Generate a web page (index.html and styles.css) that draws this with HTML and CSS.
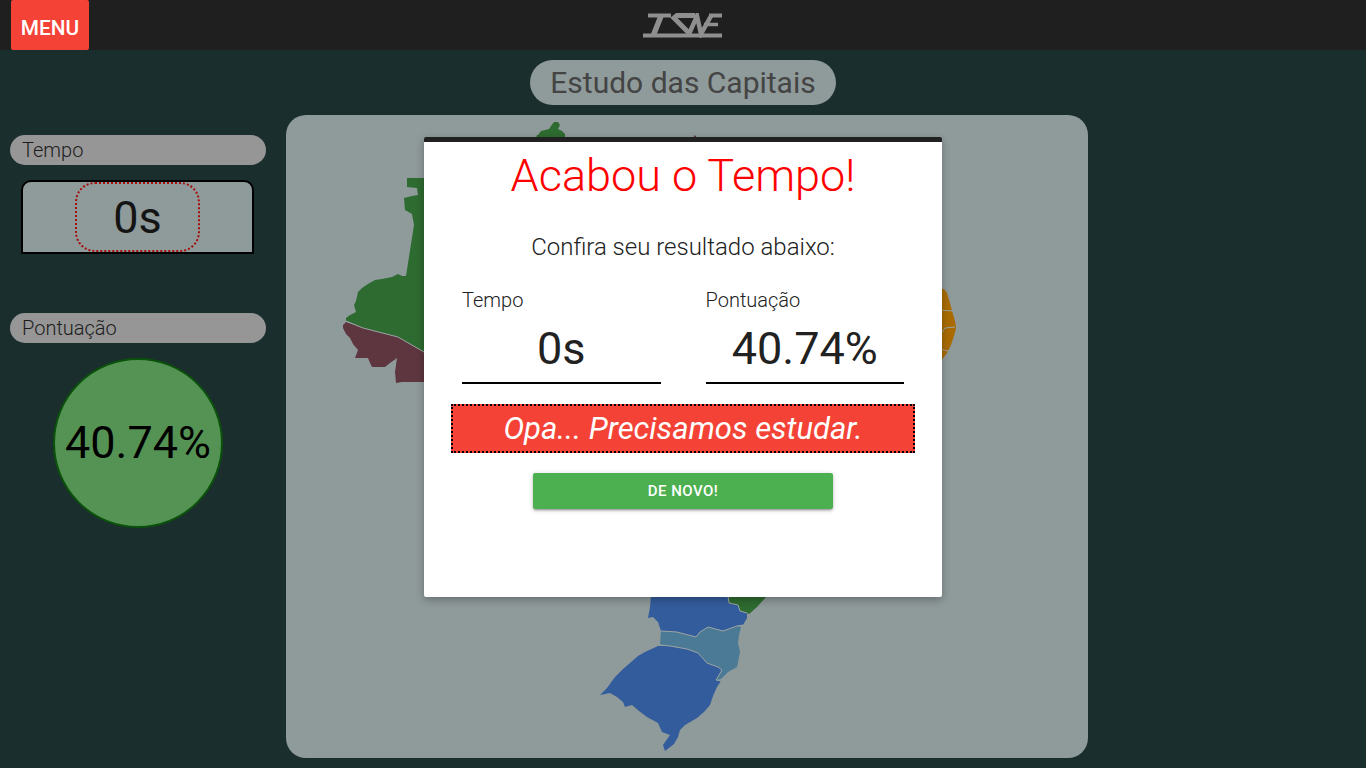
FILE: index.html
```html
<!DOCTYPE html>
<html lang="pt-BR">
<head>
<meta charset="utf-8">
<title>Estudo das Capitais</title>
<link rel="stylesheet" href="styles.css">
</head>
<body>
<header class="topbar">
  <a class="menu-btn">MENU</a>
  <svg class="logo" width="80" height="25" viewBox="0 0 80 25" aria-label="TSWE">
    <g fill="none" stroke="#8f8f8f" stroke-width="4">
      <path d="M0 22.5H79"/>
      <path d="M5 2.5H28"/>
      <path d="M18 3L10.500 22" stroke-width="5.500"/>
      <path d="M52 2.500H34L31 5L47 21" stroke-width="5"/>
      <path d="M46 21L54 3L58 21L68 3" stroke-width="4.500"/>
      <path d="M66 2.500H79"/>
      <path d="M61 11.500H75" stroke-width="3.500"/>
    </g>
  </svg>
</header>
<main class="page">
  <h1 class="page-title">Estudo das Capitais</h1>
  <div class="content">
    <aside class="side">
      <div class="side-label">Tempo</div>
      <div class="timer-box"><div class="timer-value">0s</div></div>
      <div class="side-label side-label-score">Pontuação</div>
      <div class="score-circle">40.74%</div>
    </aside>
    <section class="map-card">
      <svg class="map" viewBox="286 115 802 643" width="802" height="643">
        <path class="g" d="M538 135L541 131L545 130L549 129L551 126L554 122L558 122L560 125L558 129L562 131L565 134L565 138H536L537 135Z"/>
        <path class="r" d="M693 138L695 135L697 138Z"/>
        <path class="g" d="M407 178L424 178V352L398 337L363 328L346 321L346 318L350 315L356 312L354 305L356 301L358 292L362 288L368 284L375 280L382 279L392 277L398 274L402 276L406 276L414 225L412 214L405 210L404 198L412 196L418 195L417 188L407 187Z"/>
        <path class="r" d="M343 325L346 322L363 328L398 337L424 352V382L402 382L396 383L395 372L397 358L390 363L385 367L372 367L370 363L368 358L355 358L358 350L353 344L350 338L346 334L343 328Z"/>
        <path class="o" d="M940 289L944 289L947 293L950 303L952 311L955 321L956 328L954 336L951 345L947 353L940 362Z"/>
        <path class="b" d="M651 596L650 607L648 618L653 617L658 622L661 631L677 632L696 637L700 632L708 627L723 631L737 626L743 625L747 618L747 613L740 611L738 605L729 603L728 596Z"/>
        <path class="g" d="M729 596L729 603L738 605L740 611L747 613L749 614L757 607L767 596Z"/>
        <path class="t" d="M661 631L677 632L696 637L700 632L708 627L723 631L737 626L741 627L739 635L738 643L740 652L737 667L728 672L721 679L716 680L722 670L718 667L707 663L698 653L687 649L670 646L660 645Z"/>
        <path class="b" d="M658 646L670 646L687 649L698 653L707 663L718 667L722 670L716 680L721 681L717 687L713 696L710 705L704 712L697 718L685 725L680 730L678 737L674 744L665 751L663 745L670 735L662 732L658 723L647 717L639 711L632 705L625 707L623 702L617 697L610 693L600 695L607 688L615 677L622 670L630 663L638 656L645 652Z"/>
        <g class="borders">
          <path d="M346 321L363 328L398 337L424 352"/>
          <path d="M940 310L952 311M940 335L945 328L955 327M940 349L948 351"/>
          <path d="M728 596L729 603L738 605L740 611L747 613"/>
          <path d="M661 631L677 632L696 637L700 632L708 627L723 631L737 626L743 625"/>
          <path d="M660 645L670 646L687 649L698 653L707 663L718 667L722 670L716 680L721 681"/>
        </g>
      </svg>
    </section>
  </div>
</main>
<div class="modal">
  <h2 class="modal-title">Acabou o Tempo!</h2>
  <p class="modal-sub">Confira seu resultado abaixo:</p>
  <div class="results">
    <div class="result">
      <div class="result-label">Tempo</div>
      <div class="result-value">0s</div>
    </div>
    <div class="result">
      <div class="result-label">Pontuação</div>
      <div class="result-value">40.74%</div>
    </div>
  </div>
  <div class="verdict">Opa... Precisamos estudar.</div>
  <a class="again-btn">DE NOVO!</a>
</div>
</body>
</html>
```
FILE: styles.css
```css
* { box-sizing: border-box; }
html, body { margin: 0; height: 100%; }
body {
  background: #1b2e2e;
  font-family: Roboto, "Liberation Sans", sans-serif;
  color: #212121;
  height: 768px;
  overflow: hidden;
}
.topbar {
  height: 50px;
  background: #1f1f1f;
  display: flex;
  align-items: center;
  justify-content: center;
  position: relative;
}
.menu-btn {
  position: absolute;
  left: 11px;
  top: 0;
  width: 78px;
  height: 50px;
  background: #f44336;
  color: #fff;
  border-radius: 2px;
  font-size: 20.8px;
  font-weight: 500;
  line-height: 56px;
  text-align: center;
}
.logo { display: block; }
.page {
  display: flex;
  flex-direction: column;
  align-items: center;
  padding-top: 10px;
}
.page-title {
  margin: 0;
  width: 306px;
  height: 45px;
  border-radius: 23px;
  background: #8f9a9a;
  color: #444;
  font-size: 30px;
  font-weight: 400;
  line-height: 45px;
  text-align: center;
}
.content {
  width: 100%;
  display: flex;
  align-items: flex-start;
  margin-top: 10px;
  padding-left: 10px;
}
.side {
  width: 256px;
  margin-right: 20px;
  padding-top: 20px;
}
.side-label {
  height: 30px;
  border-radius: 15px;
  background: #969696;
  color: #1c1c1c;
  padding-left: 12px;
  font-size: 20px;
  font-weight: 300;
  line-height: 31px;
}
.side-label-score { margin-top: 59px; }
.timer-box {
  width: 233px;
  height: 74px;
  margin: 15px 0 0 11px;
  background: #8f9a9a;
  border: 2px solid #000;
  border-radius: 10px 10px 0 0;
  display: flex;
  justify-content: center;
}
.timer-value {
  width: 125px;
  height: 70px;
  border: 2px dotted #a80d0d;
  border-radius: 20px;
  color: #141414;
  font-size: 45px;
  font-weight: 400;
  line-height: 68px;
  text-align: center;
}
.score-circle {
  width: 170px;
  height: 170px;
  margin: 15px 0 0 43px;
  border-radius: 50%;
  border: 2px solid #0a520a;
  background: #559355;
  color: #000;
  font-size: 45px;
  font-weight: 400;
  line-height: 166px;
  text-align: center;
}
.map-card {
  width: 802px;
  height: 643px;
  background: #8f9a9a;
  border-radius: 20px;
  overflow: hidden;
}
.map { display: block; }
.g { fill: #2e6b30; }
.r { fill: #5e3640; }
.o { fill: #a96b00; }
.b { fill: #335c9c; }
.t { fill: #4a7a96; }
.borders {
  fill: none;
  stroke: #9aa3a3;
  stroke-width: 1;
  stroke-linejoin: round;
}
.modal {
  position: absolute;
  left: 424px;
  top: 137px;
  width: 518px;
  height: 460px;
  background: #fff;
  border-top: 5px solid #212121;
  border-radius: 2px;
  box-shadow: 0 3px 8px rgba(0,0,0,.28);
  display: flex;
  flex-direction: column;
  align-items: center;
}
.modal-title {
  margin: 5px 0 0;
  color: #f00;
  font-size: 45px;
  font-weight: 300;
  line-height: 58px;
  text-align: center;
}
.modal-sub {
  margin: 27px 0 0;
  font-size: 24px;
  font-weight: 300;
  line-height: 30px;
  text-align: center;
}
.results {
  display: flex;
  gap: 45px;
  margin-top: 26px;
}
.result { width: 198.5px; }
.result-label {
  font-size: 20px;
  font-weight: 300;
  line-height: 24px;
}
.result-value {
  height: 72px;
  border-bottom: 2px solid #000;
  font-size: 45px;
  font-weight: 400;
  line-height: 74px;
  text-align: center;
}
.verdict {
  width: 464px;
  height: 49px;
  margin-top: 20px;
  background: #f44336;
  border: 2px dotted #000;
  color: #fff;
  font-size: 31px;
  font-style: italic;
  font-weight: 400;
  line-height: 45px;
  text-align: center;
}
.again-btn {
  width: 300px;
  height: 36px;
  margin-top: 20px;
  background: #4caf50;
  color: #fff;
  border-radius: 2px;
  font-size: 15px;
  letter-spacing: .5px;
  font-weight: 500;
  line-height: 36px;
  text-align: center;
  box-shadow: 0 2px 2px rgba(0,0,0,.14), 0 3px 1px -2px rgba(0,0,0,.12), 0 1px 5px rgba(0,0,0,.2);
}
```
